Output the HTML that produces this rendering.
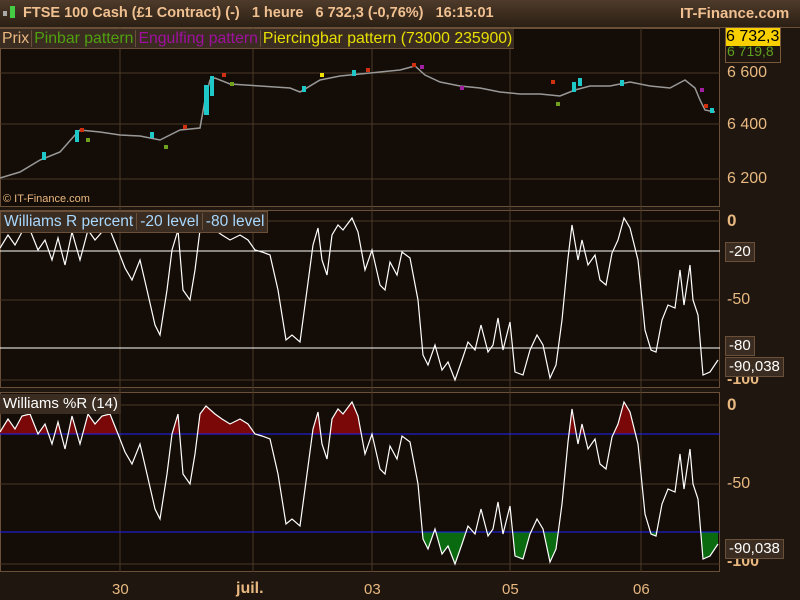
<!DOCTYPE html>
<html style="overflow:hidden"><head><meta charset="utf-8"><style>
html,body{margin:0;width:800px;height:600px;overflow:hidden;}
body{background:#1e160f;font-family:"Liberation Sans","DejaVu Sans",sans-serif;position:relative;}
.hdr{position:absolute;left:0;top:0;width:800px;height:27px;background:linear-gradient(#4e3b2a,#2b1f14);border-bottom:1px solid #6a5038;}
.t{position:absolute;white-space:nowrap;}
.tag{position:absolute;height:18px;line-height:18px;font-size:15px;background:#3a2c20;border:1px solid #6a5038;padding:0 3px;}
</style></head><body>
<div class="hdr"></div>
<div class="t" style="left:3px;top:11px;width:4px;height:5px;background:#aaa"></div>
<div class="t" style="left:10px;top:6px;width:5px;height:12px;background:#4c4"></div>
<div class="t" style="left:23px;top:5px;font-size:14.5px;font-weight:bold;color:#f0c090">FTSE 100 Cash (£1 Contract) (-) &nbsp;&nbsp;1 heure &nbsp;&nbsp;6 732,3 (-0,76%) &nbsp;&nbsp;16:15:01</div>
<div class="t" style="left:680px;top:5px;font-size:15px;font-weight:bold;color:#f0c090">IT-Finance.com</div>
<svg width="800" height="600" style="position:absolute;left:0;top:0">
<defs>
<clipPath id="cr"><rect x="0" y="207" width="720" height="43"/></clipPath>
<clipPath id="cg"><rect x="0" y="348" width="720" height="40"/></clipPath>
<polyline id="wl" points="0,248 8,235 15,245 22,232 30,230 38,250 45,240 52,260 58,238 65,265 72,232 80,260 88,230 95,240 102,232 110,230 118,250 125,268 132,280 140,260 147,290 155,325 160,335 167,290 172,250 178,230 183,290 190,300 195,270 200,230 206,222 215,230 222,235 230,240 240,235 248,240 255,250 262,252 270,255 278,290 286,340 292,335 300,342 307,290 313,245 318,228 322,260 327,275 332,235 338,225 343,230 352,218 358,232 365,270 372,250 380,285 385,290 390,262 397,275 402,252 410,258 418,300 423,355 428,365 435,345 442,370 448,362 455,380 462,360 468,342 475,350 481,325 488,352 493,345 498,318 503,350 510,322 515,372 523,375 530,350 537,335 543,345 550,378 556,365 562,320 568,258 572,225 578,260 582,240 588,265 595,255 600,280 606,285 612,253 618,240 624,218 630,228 638,260 645,330 651,350 656,352 662,320 668,305 675,308 680,270 684,305 690,265 693,300 698,315 703,375 710,372 718,360" fill="none"/>
</defs>
<rect x="0.5" y="28.5" width="719" height="178" fill="#140c06" stroke="#6a5038"/>
<rect x="0.5" y="210.5" width="719" height="177" fill="#140c06" stroke="#6a5038"/>
<rect x="0.5" y="392.5" width="719" height="179" fill="#140c06" stroke="#6a5038"/>
<g stroke="#4a3a2a" stroke-width="1">
<line x1="120" y1="28" x2="120" y2="572"/><line x1="253" y1="28" x2="253" y2="572"/><line x1="372" y1="28" x2="372" y2="572"/><line x1="510" y1="28" x2="510" y2="572"/><line x1="641" y1="28" x2="641" y2="572"/>
<line x1="0" y1="73" x2="720" y2="73"/><line x1="0" y1="124" x2="720" y2="124"/><line x1="0" y1="179" x2="720" y2="179"/>
<line x1="0" y1="221" x2="720" y2="221"/><line x1="0" y1="300" x2="720" y2="300"/><line x1="0" y1="380" x2="720" y2="380"/>
<line x1="0" y1="405" x2="720" y2="405"/><line x1="0" y1="484" x2="720" y2="484"/><line x1="0" y1="564" x2="720" y2="564"/>
</g>
<polyline points="0,178 20,172 40,160 60,152 75,135 80,130 100,132 120,135 140,136 160,140 180,130 200,128 205,100 210,80 215,78 230,84 260,86 290,88 300,92 320,80 340,76 360,74 380,72 400,70 415,66 425,75 440,82 460,86 480,88 500,92 520,94 540,94 560,96 575,90 590,86 610,86 630,82 650,86 670,88 685,80 695,88 700,100 705,110 715,112" fill="none" stroke="#999" stroke-width="1.5"/>
<g fill="#1fc8c8"><rect x="42" y="152" width="4" height="8"/><rect x="75" y="130" width="4" height="12"/><rect x="150" y="132" width="4" height="6"/><rect x="204" y="85" width="5" height="30"/><rect x="210" y="76" width="4" height="20"/><rect x="302" y="86" width="4" height="6"/><rect x="352" y="70" width="4" height="6"/><rect x="572" y="82" width="4" height="10"/><rect x="578" y="78" width="4" height="8"/><rect x="620" y="80" width="4" height="6"/><rect x="710" y="108" width="4" height="5"/></g>
<g fill="#d03010"><rect x="80" y="128" width="4" height="4"/><rect x="183" y="125" width="4" height="4"/><rect x="222" y="73" width="4" height="4"/><rect x="366" y="68" width="4" height="4"/><rect x="412" y="63" width="4" height="4"/><rect x="551" y="80" width="4" height="4"/><rect x="704" y="104" width="4" height="4"/></g>
<g fill="#70a020"><rect x="86" y="138" width="4" height="4"/><rect x="164" y="145" width="4" height="4"/><rect x="230" y="82" width="4" height="4"/><rect x="556" y="102" width="4" height="4"/></g>
<g fill="#a020a0"><rect x="420" y="65" width="4" height="4"/><rect x="460" y="86" width="4" height="4"/><rect x="700" y="88" width="4" height="4"/></g>
<rect x="320" y="73" width="4" height="4" fill="#f0e000"/>
<line x1="0" y1="251" x2="720" y2="251" stroke="#fff"/>
<line x1="0" y1="348" x2="720" y2="348" stroke="#fff"/>
<use href="#wl" stroke="#fff" stroke-width="1.2"/>
<g transform="translate(0,184)">
<polygon points="0,388 0,248 8,235 15,245 22,232 30,230 38,250 45,240 52,260 58,238 65,265 72,232 80,260 88,230 95,240 102,232 110,230 118,250 125,268 132,280 140,260 147,290 155,325 160,335 167,290 172,250 178,230 183,290 190,300 195,270 200,230 206,222 215,230 222,235 230,240 240,235 248,240 255,250 262,252 270,255 278,290 286,340 292,335 300,342 307,290 313,245 318,228 322,260 327,275 332,235 338,225 343,230 352,218 358,232 365,270 372,250 380,285 385,290 390,262 397,275 402,252 410,258 418,300 423,355 428,365 435,345 442,370 448,362 455,380 462,360 468,342 475,350 481,325 488,352 493,345 498,318 503,350 510,322 515,372 523,375 530,350 537,335 543,345 550,378 556,365 562,320 568,258 572,225 578,260 582,240 588,265 595,255 600,280 606,285 612,253 618,240 624,218 630,228 638,260 645,330 651,350 656,352 662,320 668,305 675,308 680,270 684,305 690,265 693,300 698,315 703,375 710,372 718,360 718,388" fill="#7a0808" clip-path="url(#cr)"/>
<polygon points="0,207 0,248 8,235 15,245 22,232 30,230 38,250 45,240 52,260 58,238 65,265 72,232 80,260 88,230 95,240 102,232 110,230 118,250 125,268 132,280 140,260 147,290 155,325 160,335 167,290 172,250 178,230 183,290 190,300 195,270 200,230 206,222 215,230 222,235 230,240 240,235 248,240 255,250 262,252 270,255 278,290 286,340 292,335 300,342 307,290 313,245 318,228 322,260 327,275 332,235 338,225 343,230 352,218 358,232 365,270 372,250 380,285 385,290 390,262 397,275 402,252 410,258 418,300 423,355 428,365 435,345 442,370 448,362 455,380 462,360 468,342 475,350 481,325 488,352 493,345 498,318 503,350 510,322 515,372 523,375 530,350 537,335 543,345 550,378 556,365 562,320 568,258 572,225 578,260 582,240 588,265 595,255 600,280 606,285 612,253 618,240 624,218 630,228 638,260 645,330 651,350 656,352 662,320 668,305 675,308 680,270 684,305 690,265 693,300 698,315 703,375 710,372 718,360 718,207" fill="#0a6a10" clip-path="url(#cg)"/>
</g>
<line x1="0" y1="434" x2="720" y2="434" stroke="#2020ff"/>
<line x1="0" y1="532" x2="720" y2="532" stroke="#2020ff"/>
<use href="#wl" stroke="#fff" stroke-width="1.2" transform="translate(0,184)"/>
</svg>
<div class="t" style="left:0;top:29px;height:19px;line-height:19px;font-size:15.8px;background:#3a2c20;border-bottom:1px solid #6a5038"><span style="color:#e8b880;padding:0 2px;border-right:1px solid #6a5038">Prix</span><span style="color:#50a010;padding:0 2px;border-right:1px solid #6a5038">Pinbar pattern</span><span style="color:#a010a0;padding:0 2px;border-right:1px solid #6a5038">Engulfing pattern</span><span style="color:#e8e000;padding:0 2px">Piercingbar pattern (73000 235900)</span></div>
<div class="t" style="left:3px;top:193px;font-size:11px;color:#e8b880">© IT-Finance.com</div>
<div class="t" style="left:0;top:211px;height:20px;line-height:20px;font-size:15.5px;background:#3a2c20;border:1px solid #6a5038;color:#a8d8ff"><span style="padding:0 3px;border-right:1px solid #6a5038">Williams R percent</span><span style="padding:0 3px;border-right:1px solid #6a5038">-20 level</span><span style="padding:0 3px">-80 level</span></div>
<div class="t" style="left:0;top:394px;height:20px;line-height:20px;font-size:15px;background:#3a2c20;color:#fff;padding:0 3px">Williams %R (14)</div>
<div class="t" style="left:727px;top:64px;font-size:16px;color:#e8b880">6 600</div>
<div class="t" style="left:727px;top:116px;font-size:16px;color:#e8b880">6 400</div>
<div class="t" style="left:727px;top:170px;font-size:16px;color:#e8b880">6 200</div>
<div class="t" style="left:725px;top:27px;width:54px;height:34px;border:1px solid #7a5a38"></div>
<div class="t" style="left:727px;top:43px;font-size:14px;color:#60a020">6 719,8</div>
<div class="t" style="left:726px;top:28px;width:54px;height:18px;background:#f8d000;color:#000;font-size:16px;line-height:18px;overflow:hidden">6 732,3</div>
<div class="t" style="left:727px;top:211px;font-size:17px;font-weight:bold;color:#e8b880">0</div>
<div class="t" style="left:727px;top:291px;font-size:16px;color:#e8b880">-50</div>
<div class="t" style="left:727px;top:371px;font-size:16px;font-weight:bold;color:#e8b880">-100</div>
<div class="tag" style="left:725px;top:242px;color:#fff">-20</div>
<div class="tag" style="left:725px;top:336px;color:#fff">-80</div>
<div class="tag" style="left:725px;top:357px;color:#fff">-90,038</div>
<div class="t" style="left:727px;top:395px;font-size:17px;font-weight:bold;color:#e8b880">0</div>
<div class="t" style="left:727px;top:475px;font-size:16px;color:#e8b880">-50</div>
<div class="t" style="left:727px;top:553px;font-size:16px;font-weight:bold;color:#e8b880">-100</div>
<div class="tag" style="left:725px;top:539px;color:#fff">-90,038</div>
<div class="t" style="left:112px;top:581px;font-size:15px;color:#e8b880">30</div>
<div class="t" style="left:236px;top:580px;font-size:16px;font-weight:bold;color:#e8b880">juil.</div>
<div class="t" style="left:364px;top:581px;font-size:15px;color:#e8b880">03</div>
<div class="t" style="left:502px;top:581px;font-size:15px;color:#e8b880">05</div>
<div class="t" style="left:633px;top:581px;font-size:15px;color:#e8b880">06</div>
</body></html>
